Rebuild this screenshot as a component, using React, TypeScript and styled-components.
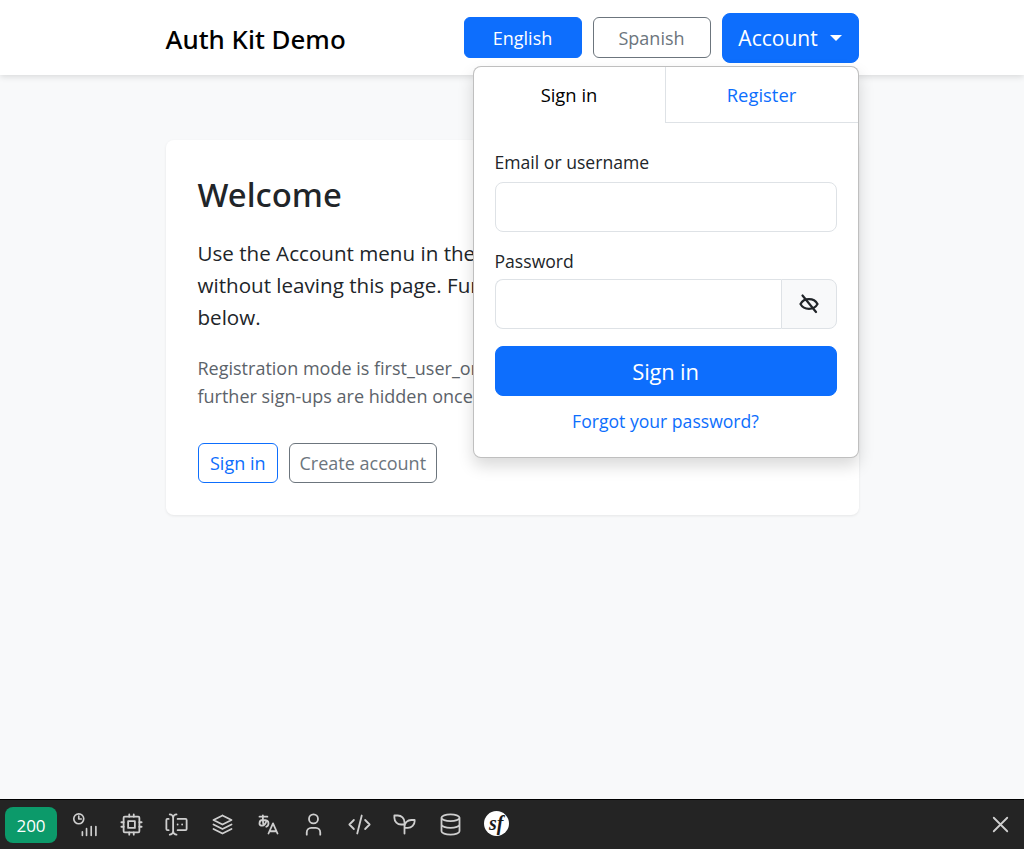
import { createGlobalStyle, styled } from "styled-components";

const GlobalStyle = createGlobalStyle`
  html, body {
    margin: 0;
    height: 100%;
  }
  body {
    background: #f8f9fa;
    color: #212529;
    font-family: "Open Sans", "Noto Sans", sans-serif;
    font-size: 18px;
  }
`;

const Page = styled.div`
  height: 849px;
  display: flex;
  flex-direction: column;
  overflow: hidden;
`;

const Navbar = styled.header`
  height: 75px;
  flex: none;
  background: #fff;
  box-shadow: 0 2px 6px rgba(0, 0, 0, 0.12);
  display: flex;
  justify-content: center;
  position: relative;
  z-index: 2;
`;

const NavInner = styled.div`
  width: 693px;
  display: flex;
  align-items: center;
  justify-content: space-between;
`;

const Brand = styled.a`
  margin-top: 3px;
  font-family: "Noto Sans", sans-serif;
  font-size: 25.9px;
  font-weight: 500;
  color: #000;
`;

const NavActions = styled.div`
  display: flex;
  align-items: center;
  gap: 11px;
  position: relative;
`;

const Button = styled.button<{ $variant: "primary" | "outline" | "blue-outline" }>`
  font-family: inherit;
  font-size: 18px;
  cursor: pointer;
  box-sizing: border-box;
  border-radius: 6px;
  height: 41px;
  padding: 0 10px;
  background: ${(p) => (p.$variant === "primary" ? "#0d6efd" : "#fff")};
  color: ${(p) => (p.$variant === "primary" ? "#fff" : p.$variant === "blue-outline" ? "#0d6efd" : "#6c757d")};
  border: 1px solid ${(p) => (p.$variant === "primary" || p.$variant === "blue-outline" ? "#0d6efd" : "#6c757d")};
`;

const LangButton = styled(Button)`
  width: 118px;
`;

const CardButton = styled(Button)<{ $wide?: boolean }>`
  height: 40px;
  padding: 0 ${(p) => (p.$wide ? "11.5px" : "9.5px")};
`;

const LargeButton = styled(Button)`
  height: 50px;
  border-radius: 8px;
  display: flex;
  align-items: center;
  justify-content: center;
`;

const AccountButton = styled(LargeButton)`
  width: 137px;
  font-size: 21px;
  gap: 12px;
`;

const SubmitButton = styled(LargeButton)`
  width: 100%;
  font-size: 22px;
  letter-spacing: -0.2px;
`;

const Caret = styled.span`
  border-top: 6px solid #fff;
  border-left: 6px solid transparent;
  border-right: 6px solid transparent;
`;

const Dropdown = styled.div`
  position: absolute;
  top: 53px;
  right: 0;
  width: 386px;
  height: 392px;
  box-sizing: border-box;
  background: #fff;
  border: 1px solid rgba(0, 0, 0, 0.25);
  border-radius: 8px;
  box-shadow: 0 8px 16px rgba(0, 0, 0, 0.15);
`;

const Tabs = styled.div`
  display: grid;
  grid-template-columns: 191px 1fr;
  height: 56px;
`;

const Tab = styled.div<{ $active?: boolean }>`
  display: flex;
  align-items: center;
  justify-content: center;
  font-size: 18.4px;
  color: ${(p) => (p.$active ? "#000" : "#0d6efd")};
  border-bottom: ${(p) => (p.$active ? "none" : "1px solid #dee2e6")};
  border-left: ${(p) => (p.$active ? "none" : "1px solid #dee2e6")};
`;

const Form = styled.form`
  padding: 26px 21px 0;
  display: flex;
  flex-direction: column;
`;

const Label = styled.label<{ $gap: number }>`
  font-size: 17.6px;
  line-height: 27px;
  margin-bottom: ${(p) => p.$gap}px;
`;

const Input = styled.input`
  box-sizing: border-box;
  height: 50px;
  width: 100%;
  border: 1px solid #dee2e6;
  border-radius: 8px;
  margin-bottom: 16px;
`;

const InputGroup = styled.div`
  display: flex;
  height: 50px;
  margin-bottom: 17px;
`;

const GroupInput = styled.input`
  box-sizing: border-box;
  flex: 1;
  min-width: 0;
  border: 1px solid #dee2e6;
  border-right: none;
  border-radius: 8px 0 0 8px;
`;

const Toggle = styled.span`
  box-sizing: border-box;
  width: 56px;
  display: flex;
  align-items: center;
  justify-content: center;
  background: #f8f9fa;
  border: 1px solid #dee2e6;
  border-radius: 0 8px 8px 0;
`;

const EyeSvg = styled.svg`
  width: 20px;
  height: 20px;
  fill: none;
  stroke: #212529;
  stroke-width: 2.2;
  stroke-linecap: round;
`;

const Forgot = styled.a`
  margin-top: 13px;
  text-align: center;
  font-size: 17.6px;
  color: #0d6efd;
`;

const Main = styled.main`
  flex: 1;
  display: flex;
  justify-content: center;
  align-items: flex-start;
  padding-top: 65px;
`;

const Card = styled.section`
  box-sizing: border-box;
  width: 693px;
  background: #fff;
  border-radius: 8px;
  box-shadow: 0 1px 3px rgba(0, 0, 0, 0.08);
  padding: 32px;
`;

const Title = styled.h1`
  margin: 0 0 19px;
  font-family: "Noto Sans", sans-serif;
  font-size: 32.9px;
  font-weight: 500;
  line-height: 46px;
`;

const Lead = styled.p`
  margin: 0 0 21px;
  font-size: 20.6px;
  line-height: 32px;
`;

const Note = styled.p`
  margin: 0 0 33px;
  font-size: 18px;
  line-height: 28px;
  color: #5c636a;
`;

const CardActions = styled.div`
  display: flex;
  gap: 11px;
`;

const DebugBar = styled.footer`
  box-sizing: border-box;
  height: 50px;
  flex: none;
  background: #242424;
  border-top: 1px solid #000;
  display: flex;
  align-items: center;
  padding: 0 10.5px 1px 5px;
`;

const StatusBadge = styled.div`
  width: 52px;
  height: 36px;
  margin: 2px 6px 0 0;
  border-radius: 8px;
  background: #0c9a6a;
  color: #fff;
  font-size: 17px;
  display: flex;
  align-items: center;
  justify-content: center;
`;

const DebugIcon = styled.span`
  width: 45.6px;
  display: flex;
  justify-content: center;
`;

const CloseButton = styled.span`
  margin-left: auto;
  display: flex;
`;

const Svg = styled.svg`
  width: 27px;
  height: 27px;
  fill: none;
  stroke: #cfcfcf;
  stroke-width: 1.6;
  stroke-linecap: round;
  stroke-linejoin: round;
`;

const SymfonyLogo = styled.span`
  width: 25px;
  height: 25px;
  margin-bottom: 1px;
  border-radius: 50%;
  background: #fff;
  color: #1a1a1a;
  font-family: "Liberation Serif", serif;
  font-style: italic;
  font-weight: 700;
  font-size: 20px;
  line-height: 24px;
  text-align: center;
`;

const toolbarIcons = [
  <>
    <circle cx="6.500" cy="7.500" r="4.800" />
    <path d="M6.500 5v2.700h2.400M10 20v3.500M14 17v6.500M18.500 15v8.500M23 15v8.500" />
  </>,
  <>
    <rect x="5" y="5" width="14" height="14" rx="1" />
    <rect x="9" y="9" width="6" height="6" />
    <path d="M3 10h2M3 14h2M10 3v2M14 3v2M21 10h-2M21 14h-2M14 21v-2M10 21v-2" />
  </>,
  <path d="M12 3a3 3 0 0 0-3 3v12a3 3 0 0 0 3 3M6 3a3 3 0 0 1 3 3v12a3 3 0 0 1-3 3M13 7h7a1 1 0 0 1 1 1v8a1 1 0 0 1-1 1h-7M5 7h-1a1 1 0 0 0-1 1v8a1 1 0 0 0 1 1h1M17 12h.01M13 12h.01" />,
  <path d="M12 4l-8 4l8 4l8-4l-8-4M4 12l8 4l8-4M4 16l8 4l8-4" />,
  <path d="M4 5h7M7 4c0 4.846 0 7 .5 8M10 8.500c0 2.286-2 4.500-3.500 4.500s-2.500-1.135-2.500-2c0-2 1-3 3-3s5 .57 5 2.857c0 1.524-.667 2.571-2 3.143M12 20l4-9l4 9M19.100 18h-6.200" />,
  <path d="M8 7a4 4 0 1 0 8 0a4 4 0 0 0-8 0M6 21v-2a4 4 0 0 1 4-4h4a4 4 0 0 1 4 4v2" />,
  <path d="M7 8l-4 4l4 4M17 8l4 4l-4 4M14 4l-4 16" />,
  <path d="M12 10a6 6 0 0 0-6-6h-3v2a6 6 0 0 0 6 6h3M12 14a6 6 0 0 1 6-6h3v1a6 6 0 0 1-6 6h-3M12 20v-10" />,
  <path d="M4 6a8 3 0 1 0 16 0a8 3 0 1 0-16 0M4 6v6a8 3 0 0 0 16 0v-6M4 12v6a8 3 0 0 0 16 0v-6" />,
];

function App() {
  return (
    <Page>
      <GlobalStyle />
      <Navbar>
        <NavInner>
          <Brand>Auth Kit Demo</Brand>
          <NavActions>
            <LangButton $variant="primary">English</LangButton>
            <LangButton $variant="outline">Spanish</LangButton>
            <AccountButton $variant="primary">
              Account <Caret />
            </AccountButton>
            <Dropdown>
              <Tabs>
                <Tab $active>Sign in</Tab>
                <Tab>Register</Tab>
              </Tabs>
              <Form>
                <Label $gap={6}>Email or username</Label>
                <Input />
                <Label $gap={4}>Password</Label>
                <InputGroup>
                  <GroupInput />
                  <Toggle>
                    <EyeSvg viewBox="0 0 20 20">
                      <path d="M1.500 10C5 3.500 15 3.500 18.500 10C15 16.500 5 16.500 1.500 10Z" />
                      <path d="M3.500 1.500L17 18" />
                    </EyeSvg>
                  </Toggle>
                </InputGroup>
                <SubmitButton as="div" $variant="primary">
                  Sign in
                </SubmitButton>
                <Forgot>Forgot your password?</Forgot>
              </Form>
            </Dropdown>
          </NavActions>
        </NavInner>
      </Navbar>
      <Main>
        <Card>
          <Title>Welcome</Title>
          <Lead>
            Use the Account menu in the top bar to sign in or register one without leaving this page. Further details about registration are
            <br />
            below.
          </Lead>
          <Note>
            Registration mode is first_user_only, so the first visitor can become admin; further sign-ups are hidden once an account exists.
          </Note>
          <CardActions>
            <CardButton $variant="blue-outline" $wide>Sign in</CardButton>
            <CardButton $variant="outline">Create account</CardButton>
          </CardActions>
        </Card>
      </Main>
      <DebugBar>
        <StatusBadge>200</StatusBadge>
        {toolbarIcons.map((icon, i) => (
          <DebugIcon key={i}>
            <Svg viewBox={i === 0 ? "0 0 26 26" : "0 0 24 24"}>{icon}</Svg>
          </DebugIcon>
        ))}
        <DebugIcon>
          <SymfonyLogo>sf</SymfonyLogo>
        </DebugIcon>
        <CloseButton>
          <Svg viewBox="0 0 24 24">
            <path d="M18 6l-12 12M6 6l12 12" />
          </Svg>
        </CloseButton>
      </DebugBar>
    </Page>
  );
}

export default App;
